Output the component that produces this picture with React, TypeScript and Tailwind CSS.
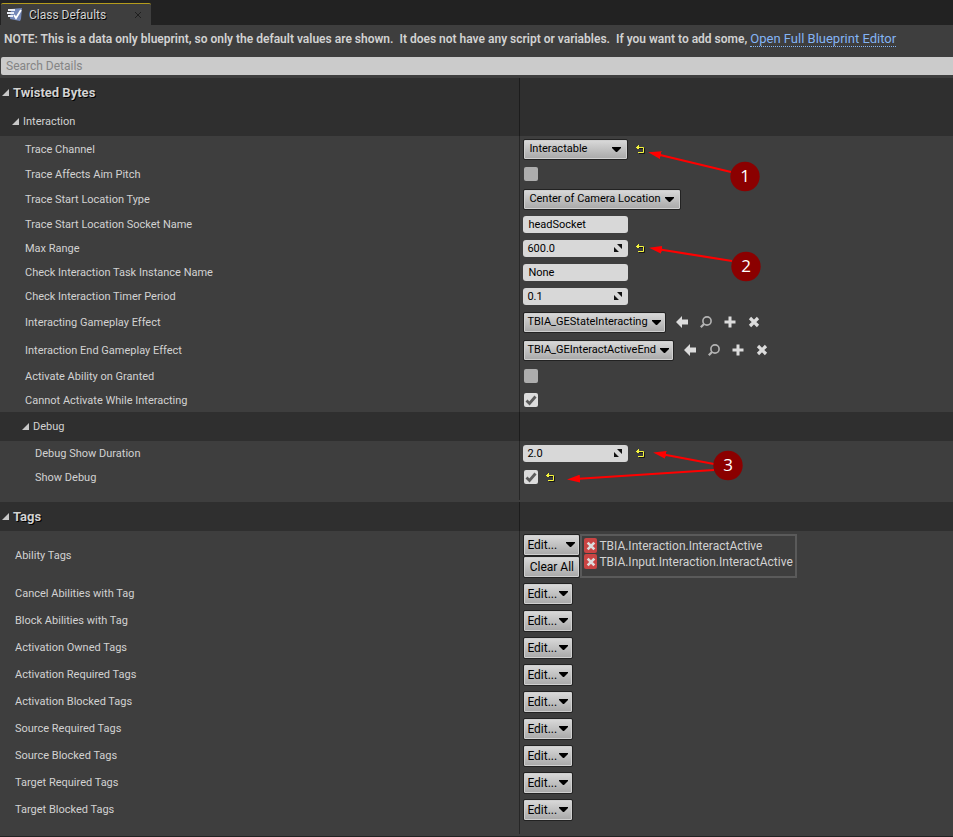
import { useState, type ReactNode } from "react";

const skin =
  "rounded-[2px] border border-[#222222] bg-linear-to-b from-[#dadada] to-[#a8a8a8] text-black shadow-[inset_0_0_0_1px_#d0d0d0]";

function Caret({ className = "" }: { className?: string }) {
  return (
    <svg className={`h-[5px] w-[9px] shrink-0 ${className}`} viewBox="0 0 9 5" aria-hidden="true">
      <path d="M0 0H9V1L5 5H4L0 1Z" fill="#000" />
    </svg>
  );
}

function Expander() {
  return (
    <svg className="h-[7px] w-[7px] shrink-0" viewBox="0 0 7 7" aria-hidden="true">
      <path d="M7 0V7H0Z" fill="#c8c8c8" />
    </svg>
  );
}

function ResetButton() {
  return (
    <button type="button" aria-label="Reset to default" className="ml-1 flex h-4 w-4 items-center justify-center">
      <svg className="h-[10px] w-[10px]" viewBox="0 0 10 10" aria-hidden="true">
        <path d="M2 4.500H9.500V9.500H4" fill="none" stroke="#151515" />
        <path d="M1 3.500H8.500V8.500H3M3.500 1V5M2.500 2V5" fill="none" stroke="#f4f43c" />
      </svg>
    </button>
  );
}

function Tick({ label, initial = false }: { label: string; initial?: boolean }) {
  const [on, setOn] = useState(initial);
  return (
    <span className="relative ml-px flex h-[14px] w-[14px]">
      <input
        id={label}
        type="checkbox"
        checked={on}
        onChange={() => setOn(!on)}
        className="h-[14px] w-[14px] appearance-none rounded-[2px] bg-[#adadad] checked:bg-[#dcdcdc]"
      />
      {on && (
        <svg className="pointer-events-none absolute inset-0" viewBox="0 0 14 14" aria-hidden="true">
          <path d="M2.500 7.500L5.500 10.500L11.500 3.500" fill="none" stroke="#5c5c5c" strokeWidth="2.800" />
        </svg>
      )}
    </span>
  );
}

function TextBox({ label, value, spin = false }: { label: string; value: string; spin?: boolean }) {
  return (
    <span className="relative flex w-[105px]">
      <input
        id={label}
        type="text"
        defaultValue={value}
        className={`h-[17px] w-full rounded-[3px] bg-[#d8d8d8] text-[11px] text-black ${spin ? "pl-1" : "pl-[5px]"}`}
      />
      {spin && (
        <svg className="pointer-events-none absolute top-1 right-[6px] h-[8px] w-[8px]" viewBox="0 0 8 8" aria-hidden="true">
          <path d="M3 0H8V5ZM0 3V8H5Z" fill="#111" />
        </svg>
      )}
    </span>
  );
}

function Choice({ label, value, width }: { label: string; value: string; width: string }) {
  return (
    <span className={`relative flex items-center ${width}`}>
      <select id={label} className={`h-[21px] w-full appearance-none pt-px pl-[5px] text-[11px] ${skin}`}>
        <option>{value}</option>
      </select>
      <Caret className="pointer-events-none absolute right-[7px]" />
    </span>
  );
}

function AssetPicker({ label, value }: { label: string; value: string }) {
  const tool = "flex h-4 w-4 items-center justify-center";
  return (
    <>
      <button id={label} type="button" className={`flex h-[21px] items-center pr-1 pl-[3px] text-[11px] ${skin}`}>
        <span className="pt-px">{value}</span>
        <Caret className="ml-1" />
      </button>
      <span className="ml-2 flex gap-2">
        <button type="button" aria-label="Use selected asset" className={tool}>
          <svg className="h-3 w-3" viewBox="0 0 12 12" aria-hidden="true">
            <path d="M0 6L6 0V3.500H12V8.500H6V12Z" fill="#dcdcdc" />
          </svg>
        </button>
        <button type="button" aria-label="Browse to asset" className={tool}>
          <svg className="h-3 w-3" viewBox="0 0 12 12" fill="none" stroke="#b4b4b4" aria-hidden="true">
            <circle cx="7" cy="5" r="4.100" strokeWidth="1.600" />
            <path d="M4 8L.8 11.200" strokeWidth="2.200" />
          </svg>
        </button>
        <button type="button" aria-label="Create new asset" className={tool}>
          <svg className="h-3 w-3" viewBox="0 0 12 12" aria-hidden="true">
            <path d="M6 .5V11.500M.5 6H11.500" stroke="#dcdcdc" strokeWidth="3" />
          </svg>
        </button>
        <button type="button" aria-label="Clear" className={tool}>
          <Cross className="h-3 w-3" />
        </button>
      </span>
    </>
  );
}

function Cross({ className }: { className: string }) {
  return (
    <svg className={className} viewBox="0 0 12 12" aria-hidden="true">
      <path d="M2 2L10 10M10 2L2 10" stroke="#dcdcdc" strokeWidth="3.200" />
    </svg>
  );
}

const columns = "grid grid-cols-[54.5%_1fr]";

function Row({ label, height, indent, children }: { label: string; height: string; indent: string; children?: ReactNode }) {
  return (
    <div className={`${columns} ${height}`}>
      <label htmlFor={label} className={`flex items-center pt-[2px] text-[11px] ${indent}`}>
        {label}
      </label>
      <div className="flex items-center border-l border-[#262626] pl-[3px]">{children}</div>
    </div>
  );
}

function Heading({ title, indent, major = false }: { title: string; indent: string; major?: boolean }) {
  return (
    <div className={`${columns} h-[29px] bg-[#2f2f2f]`}>
      <button type="button" className={`flex items-center gap-1 ${indent}`}>
        <Expander />
        <span className={major ? "text-[13px] font-bold [text-shadow:1px_1px_0_#000]" : "pt-px text-[11px]"}>{title}</span>
      </button>
      <div className="border-l border-[#1c1c1c]" />
    </div>
  );
}

function EditButton({ id, wide = false }: { id: string; wide?: boolean }) {
  return (
    <button
      id={id}
      type="button"
      className={`flex h-[22px] items-center justify-between pr-1 pl-[3px] text-[12px] ${wide ? "w-[57px]" : "w-[50px]"} ${skin}`}
    >
      Edit...
      <Caret />
    </button>
  );
}

const activeTags = ["TBIA.Interaction.InteractActive", "TBIA.Input.Interaction.InteractActive"];

const tagRows = [
  "Cancel Abilities with Tag",
  "Block Abilities with Tag",
  "Activation Owned Tags",
  "Activation Required Tags",
  "Activation Blocked Tags",
  "Source Required Tags",
  "Source Blocked Tags",
  "Target Required Tags",
  "Target Blocked Tags",
];

const arrows = [
  "M731 172L656 154",
  "M732 261L657 249",
  "M714 464L661 454",
  "M714 470L575 479",
];

const badges = [
  { n: 1, x: 745, y: 176 },
  { n: 2, x: 746, y: 266 },
  { n: 3, x: 728, y: 465 },
];

function Callouts() {
  return (
    <svg
      className="pointer-events-none absolute top-[130px] left-[54.5%] ml-[41px] h-[370px] w-[210px]"
      viewBox="560 130 210 370"
      aria-hidden="true"
    >
      <defs>
        <marker id="head" markerUnits="userSpaceOnUse" markerWidth="13" markerHeight="8" refX="5" refY="4" orient="auto" viewBox="0 0 13 8">
          <path d="M0 0L13 4L0 8Z" fill="#ff0000" />
        </marker>
      </defs>
      {arrows.map((d) => (
        <path key={d} d={d} stroke="#ff0000" strokeWidth="2.200" markerEnd="url(#head)" />
      ))}
      {badges.map((b) => (
        <g key={b.n}>
          <circle cx={b.x} cy={b.y + 0.5} r="14.700" fill="#8b0000" />
          <text x={b.x} y={b.y + 6} textAnchor="middle" fill="#fff" className="font-['Open_Sans',sans-serif] text-[17px]">
            {b.n}
          </text>
        </g>
      ))}
    </svg>
  );
}

export default function App() {
  return (
    <div className="relative min-h-screen bg-[#3e3e3e] font-[Roboto,sans-serif] text-[#d2d2d2]">
      <header className="flex h-[25px] items-end bg-[#222222] pl-px">
        <div className="flex h-[22px] w-[150px] items-center rounded-t-[2px] border-t border-[#b59c1c] bg-[#3e3e3e] pl-[6px]">
          <svg className="h-[14px] w-[16px]" viewBox="0 0 16 14" aria-hidden="true">
            <path d="M4 1L15 0L14 11L13 13L3 11Z" fill="#7488b8" />
            <path d="M1 2H8M0 5H7M1 8H6" stroke="#e8ecf5" strokeWidth="2" />
            <path d="M7 7L9 10L14 2" stroke="#fff" strokeWidth="1.800" fill="none" />
          </svg>
          <span className="ml-[6px] text-[12px] [text-shadow:1px_1px_0_#000]">Class Defaults</span>
          <button type="button" aria-label="Close tab" className="mr-[10px] ml-auto">
            <svg className="h-[6px] w-[6px]" viewBox="0 0 6 6" aria-hidden="true">
              <path d="M0 0L6 6M6 0L0 6" stroke="#1f1f1f" />
            </svg>
          </button>
        </div>
      </header>
      <p className="flex h-8 items-baseline pt-[5px] pl-1 text-[12px] whitespace-pre">
        <strong className="font-semibold">
          NOTE: This is a data only blueprint, so only the default values are shown.{"  "}It does not have any script or
          variables.{"  "}If you want to add some,{" "}
        </strong>
        <a href="#editor" className="border-b border-dotted border-[#84b4f4] text-[13px] leading-[15px] text-[#84b4f4]">
          Open Full Blueprint Editor
        </a>
      </p>
      <div className="pb-[3px] pl-px">
        <input
          type="search"
          aria-label="Search Details"
          placeholder="Search Details"
          className="block h-[18px] w-full rounded-l-[2px] bg-[#cbcbcb] pl-[5px] text-[12px] text-black placeholder:text-[#858585]"
        />
      </div>

      <main className="border-b border-[#222222] pb-[2px]">
        <Heading title="Twisted Bytes" indent="pl-[2px]" major />
        <Heading title="Interaction" indent="pl-3" />
        <Row label="Trace Channel" height="h-[26px]" indent="pl-[25px]">
          <Choice label="Trace Channel" value="Interactable" width="w-[105px]" />
          <ResetButton />
        </Row>
        <Row label="Trace Affects Aim Pitch" height="h-6" indent="pl-[25px]">
          <Tick label="Trace Affects Aim Pitch" />
        </Row>
        <Row label="Trace Start Location Type" height="h-[26px]" indent="pl-[25px]">
          <Choice label="Trace Start Location Type" value="Center of Camera Location" width="w-[158px]" />
        </Row>
        <Row label="Trace Start Location Socket Name" height="h-6" indent="pl-[25px]">
          <TextBox label="Trace Start Location Socket Name" value="headSocket" />
        </Row>
        <Row label="Max Range" height="h-6" indent="pl-[25px]">
          <TextBox label="Max Range" value="600.0" spin />
          <ResetButton />
        </Row>
        <Row label="Check Interaction Task Instance Name" height="h-6" indent="pl-[25px]">
          <TextBox label="Check Interaction Task Instance Name" value="None" />
        </Row>
        <Row label="Check Interaction Timer Period" height="h-6" indent="pl-[25px]">
          <TextBox label="Check Interaction Timer Period" value="0.1" spin />
        </Row>
        <Row label="Interacting Gameplay Effect" height="h-7" indent="pl-[25px]">
          <AssetPicker label="Interacting Gameplay Effect" value="TBIA_GEStateInteracting" />
        </Row>
        <Row label="Interaction End Gameplay Effect" height="h-7" indent="pl-[25px]">
          <AssetPicker label="Interaction End Gameplay Effect" value="TBIA_GEInteractActiveEnd" />
        </Row>
        <Row label="Activate Ability on Granted" height="h-6" indent="pl-[25px]">
          <Tick label="Activate Ability on Granted" />
        </Row>
        <Row label="Cannot Activate While Interacting" height="h-6" indent="pl-[25px]">
          <Tick label="Cannot Activate While Interacting" initial />
        </Row>

        <Heading title="Debug" indent="pl-[22px]" />
        <Row label="Debug Show Duration" height="h-6" indent="pl-[35px]">
          <TextBox label="Debug Show Duration" value="2.0" spin />
          <ResetButton />
        </Row>
        <Row label="Show Debug" height="h-6" indent="pl-[35px]">
          <Tick label="Show Debug" initial />
          <ResetButton />
        </Row>
        <div className={`${columns} h-[13px] pb-[2px]`}>
          <div />
          <div className="border-l border-[#262626]" />
        </div>

        <Heading title="Tags" indent="pl-[2px]" major />
        <Row label="Ability Tags" height="h-[49px]" indent="pl-[15px]">
          <div className="flex flex-col">
            <EditButton id="Ability Tags" wide />
            <button type="button" className={`h-[22px] w-[57px] text-[12px] ${skin}`}>
              Clear All
            </button>
          </div>
          <ul className="flex h-11 flex-col border-2 border-[#5a5a5a] px-[2px] pt-[2px] text-[12px]">
            {activeTags.map((tag) => (
              <li key={tag} className="flex h-4 items-center gap-[2px]">
                <button
                  type="button"
                  aria-label={`Remove ${tag}`}
                  className="flex h-[15px] w-[13px] items-center justify-center rounded-[2px] bg-[#c94443]"
                >
                  <Cross className="h-[10px] w-[10px]" />
                </button>
                {tag}
              </li>
            ))}
          </ul>
        </Row>
        {tagRows.map((label) => (
          <Row key={label} label={label} height="h-[27px]" indent="pl-[15px]">
            <EditButton id={label} />
          </Row>
        ))}
        <div className={`${columns} h-[11px]`}>
          <div />
          <div className="border-l border-[#262626]" />
        </div>
      </main>
      <Callouts />
    </div>
  );
}
